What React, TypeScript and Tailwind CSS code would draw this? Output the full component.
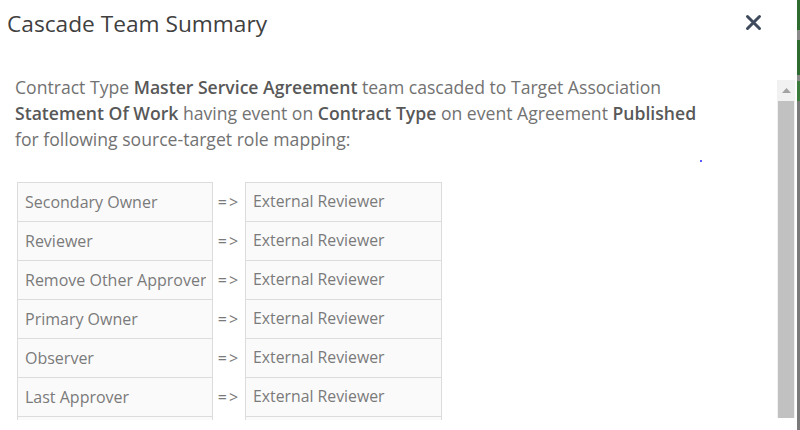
import React from "react";

const rows = [
  "Secondary Owner",
  "Reviewer",
  "Remove Other Approver",
  "Primary Owner",
  "Observer",
  "Last Approver",
  "",
];

export default function App() {
  return (
    <div
      className="relative flex w-[800px] h-[430px] overflow-hidden bg-white"
      style={{ fontFamily: '"Open Sans", "Noto Sans", sans-serif' }}
    >
      <div className="flex flex-1 flex-col">
        <div className="flex h-[74px] items-start justify-between pl-[7px] pr-[35px] pt-[8px]">
          <h1 className="text-[22.7px] leading-[32px] text-[#404040]">Cascade Team Summary</h1>
          <svg width="17" height="17" viewBox="0 0 17 17" className="mt-[6px]">
            <path d="M2.5 2.5 L14.5 14.5 M14.5 2.5 L2.5 14.5" stroke="#3f4a5c" strokeWidth="3" strokeLinecap="round" />
          </svg>
        </div>
        <div className="flex h-[346px]">
          <div className="flex-1 overflow-hidden pl-[15px]">
            <p className="whitespace-nowrap text-[17.6px] leading-[26px] text-[#727272]">
              Contract Type <b className="font-semibold text-[#585858]">Master Service Agreement</b> team cascaded to Target Association
              <br />
              <b className="font-semibold text-[#585858]">Statement Of Work</b> having event on{" "}
              <b className="font-semibold text-[#585858]">Contract Type</b> on event Agreement{" "}
              <b className="font-semibold text-[#585858]">Published</b>
              <br />
              for following source-target role mapping:
            </p>
            <div className="ml-[2px] mt-[30px] flex flex-col">
              {rows.map((r, i) => (
                <div key={i} className={`flex items-center ${i > 0 ? "-mt-px" : ""}`}>
                  <div className="flex h-[40px] w-[196px] items-center border border-[#dcdcdc] bg-[#fafafa] pl-[7px] text-[16px] text-[#7a7a7a]">
                    <span className="block w-[181px] overflow-hidden whitespace-nowrap">{r}</span>
                  </div>
                  <div className="w-[32px] text-center text-[16px] text-[#7a7a7a] tracking-[2px]">{r ? "=>" : ""}</div>
                  <div className="flex h-[40px] w-[197px] items-center overflow-hidden whitespace-nowrap border border-[#dcdcdc] bg-[#fafafa] pl-[7px] text-[15.8px] text-[#7a7a7a]">
                    {r ? "External Reviewer" : ""}
                  </div>
                </div>
              ))}
            </div>
          </div>
          <div className="mb-[2px] mr-[2px] mt-[6px] flex w-[18px] flex-col bg-[#f1f1f1]">
            <div className="flex h-[21px] items-center justify-center">
              <svg width="9" height="5" viewBox="0 0 9 5">
                <path d="M0 5 L4.5 0 L9 5 Z" fill="#a3a3a3" />
              </svg>
            </div>
            <div className="mx-[1px] flex-1 bg-[#c1c1c1]" />
          </div>
        </div>
        <div className="h-[10px] bg-white" />
      </div>
      <div className="flex w-[3px] flex-col bg-[#7a7a7a]">
        <div className="h-[30px] bg-[#2e6b2e]" />
        <div className="h-[10px] bg-[#8a8a8a]" />
        <div className="h-[35px] bg-[#2e6b2e]" />
        <div className="h-[6px] bg-[#8a8a8a]" />
        <div className="h-[20px] bg-[#3a7a3a]" />
        <div className="flex-1 bg-[#7a7a7a]" />
      </div>
      <span className="absolute left-[700px] top-[160px] h-[2px] w-[2px] bg-[#5a5aff]" />
    </div>
  );
}
